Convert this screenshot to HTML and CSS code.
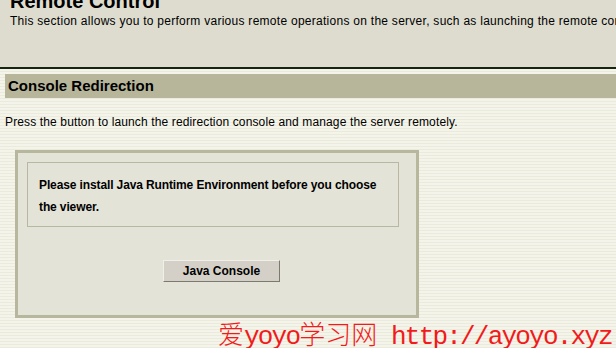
FILE: index.html
```html
<!DOCTYPE html>
<html lang="en">
<head>
    <meta charset="UTF-8">
    <meta name="viewport" content="width=device-width, initial-scale=1.0">
    <title>Remote Control</title>
    <link rel="stylesheet" href="styles.css">
</head>
<body>
    <div class="page-top">
        <h1>Remote Control</h1>
        <p>This section allows you to perform various remote operations on the server, such as launching the remote console and controlling the server power.</p>
    </div>
    <h2 class="section-head">Console Redirection</h2>
    <p class="section-text">Press the button to launch the redirection console and manage the server remotely.</p>
    <div class="outer-box">
        <div class="inner-box">
            Please install Java Runtime Environment before you choose the viewer.
        </div>
        <div class="button-row">
            <button type="button">Java Console</button>
        </div>
    </div>
    <div class="watermark">爱<span class="wm-latin">yoyo</span>学习网<span class="wm-latin"> http://ayoyo.xyz</span></div>
</body>
</html>
```

FILE: styles.css
```css
body {
    font-family: "Liberation Sans", Arial, sans-serif;
    font-size: 12px;
    color: #000;
    margin: 0;
    padding: 0;
    overflow: hidden;
    background-color: #f1f1e5;
    background-image: repeating-linear-gradient(to bottom, #f4f4ea 0, #f4f4ea 2px, #ebebdd 2px, #ebebdd 3px);
}

.page-top {
    background-color: #dddccf;
    height: 67px;
    padding-left: 10px;
    border-bottom: 2px solid #15250f;
    white-space: nowrap;
    overflow: hidden;
}

.page-top h1 {
    font-size: 20px;
    margin: -11px 0 0 0;
    line-height: 24px;
}

.page-top p {
    margin: 0;
    line-height: 16px;
    letter-spacing: 0.27px;
}

.section-head {
    background-color: #b7b69b;
    margin: 5px 0 0 5px;
    height: 24px;
    line-height: 24px;
    font-size: 15px;
    padding-left: 3px;
}

.section-text {
    margin: 0;
    padding: 17px 0 0 5px;
    line-height: 14px;
    letter-spacing: 0.13px;
}

.outer-box {
    margin: 21px 0 0 15px;
    width: 389px;
    border: 3px solid #b6b79d;
    background-color: #e4e3d7;
    padding: 9px 0 33px 9px;
    box-sizing: content-box;
}

.inner-box {
    width: 349px;
    border: 1px solid #b8b8a0;
    padding: 11px 10px 8px 11px;
    font-weight: bold;
    line-height: 22px;
    letter-spacing: -0.12px;
}

.button-row {
    padding: 33px 0 0 136px;
}

button {
    font-family: "Liberation Sans", Arial, sans-serif;
    font-size: 12px;
    font-weight: bold;
    color: #000;
    width: 117px;
    height: 22px;
    padding: 0;
    background-color: #d4d0c8;
    border: 1px solid;
    border-color: #f0efea #7a7a70 #7a7a70 #f0efea;
    display: block;
}

.watermark {
    position: absolute;
    left: 218px;
    top: 320px;
    font-family: "Noto Sans CJK SC", sans-serif;
    font-weight: 300;
    font-size: 26px;
    line-height: 26px;
    color: #f21a1a;
    white-space: nowrap;
}

.wm-latin {
    font-family: "Liberation Mono", monospace;
    font-weight: normal;
    font-size: 26px;
    letter-spacing: -1.8px;
}
```
